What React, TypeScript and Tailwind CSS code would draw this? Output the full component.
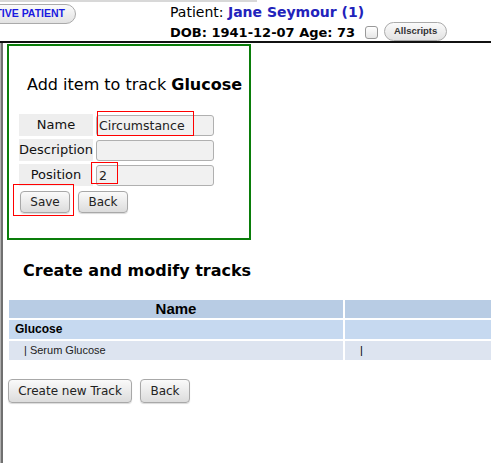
import React from "react";

const btn =
  "rounded-[4px] border border-[#a8a8a8] bg-gradient-to-b from-[#fafafa] to-[#dcdcdc] text-[#222] shadow-[0_1px_1px_rgba(0,0,0,0.15)]";

export default function App() {
  return (
    <div className="relative w-[491px] h-[465px] overflow-hidden bg-white text-black font-['DejaVu_Sans',sans-serif]">
      {/* header */}
      <div className="relative h-[43px] border-b-2 border-[#111]">
        <div className="absolute left-0 top-0 w-[257px] h-[2px] bg-[#d8d8d8]" />
        <div className="absolute left-[-46px] top-[4px] w-[122px] h-[20px] rounded-full border border-[#aaa] bg-gradient-to-b from-[#fbfbfb] to-[#e2e2e2] flex items-center justify-end pr-[10px] text-[10.5px] font-bold text-[#1a1ae0] font-['Liberation_Sans',sans-serif] whitespace-nowrap">
          ACTIVE PATIENT
        </div>
        <div className="absolute left-[170px] top-[3px] text-[14px] leading-[18px] whitespace-nowrap">
          Patient: <span className="font-bold text-[#2222bb]">Jane Seymour (1)</span>
        </div>
        <div className="absolute left-[170px] top-[22px] flex items-center whitespace-nowrap">
          <span className="text-[13px] font-bold leading-[18px] mt-[2px]">DOB: 1941-12-07 Age: 73</span>
          <span className="ml-[10px] w-[13px] h-[13px] rounded-[3px] border border-[#999] bg-gradient-to-b from-[#fff] to-[#e6e6e6]" />
          <span className="ml-[6px] h-[19px] w-[63px] rounded-full border border-[#aaa] bg-gradient-to-b from-[#fbfbfb] to-[#e2e2e2] flex items-center justify-center text-[9.5px] font-bold text-[#333] font-['Liberation_Sans',sans-serif] -mt-[2px]">
            Allscripts
          </span>
        </div>
      </div>

      {/* body */}
      <div className="flex h-[420px]">
        <div className="w-[1px] shrink-0 bg-[#b0b0b0]" />
        <div className="w-[2px] shrink-0 bg-[#707070]" />
        <div className="flex-1 min-w-0 pl-[4px]">
          {/* green box */}
          <div className="w-[244px] h-[196px] border-2 border-[#0a7d0a] mt-[1px] pl-[10px] pt-[28px] relative">
            <div className="pl-[8px] text-[16px] leading-[22px] whitespace-nowrap">
              Add item to track <span className="font-bold">Glucose</span>
            </div>
            <div className="mt-[18px] flex flex-col gap-[3px]">
              {[
                ["Name", "Circumstance"],
                ["Description", ""],
                ["Position", "2"],
              ].map(([label, val]) => (
                <div key={label} className="flex items-center h-[22px]">
                  <div className="w-[74px] h-[22px] bg-[#eeeeee] text-[13px] leading-[22px] text-center text-[#111] whitespace-nowrap">
                    {label}
                  </div>
                  <div className="ml-[3px] w-[118px] h-[21px] rounded-[3px] border border-[#b0b0b0] bg-[#f1f1f1] text-[12.5px] leading-[19px] pl-[2px] text-[#222]">
                    {val}
                  </div>
                </div>
              ))}
            </div>
            <div className="mt-[5px] flex gap-[8px] pl-[1px]">
              <div className={btn + " w-[50px] h-[22px] text-[12px] leading-[20px] text-center"}>Save</div>
              <div className={btn + " w-[50px] h-[22px] text-[12px] leading-[20px] text-center"}>Back</div>
            </div>
            {/* red annotation boxes */}
            <div className="absolute left-[88px] top-[65px] w-[97px] h-[25px] border border-[#ff0000]" />
            <div className="absolute left-[82px] top-[116px] w-[27px] h-[22px] border border-[#ff0000]" />
            <div className="absolute left-[4px] top-[138px] w-[61px] h-[32px] border border-[#ff0000]" />
          </div>

          <div className="mt-[20px] ml-[16px] text-[16px] font-bold leading-[22px] whitespace-nowrap">
            Create and modify tracks
          </div>

          <div className="mt-[18px] ml-[2px] w-[490px] font-['Liberation_Sans',sans-serif]">
            <div className="flex gap-[2px] h-[18px]">
              <div className="w-[334px] bg-[#b8cce4] text-[15px] font-bold text-center leading-[18px]">Name</div>
              <div className="flex-1 bg-[#b8cce4]" />
            </div>
            <div className="flex gap-[2px] h-[19px] mt-[2px]">
              <div className="w-[334px] bg-[#c6d9f0] text-[12px] font-bold leading-[19px] pl-[6px]">Glucose</div>
              <div className="flex-1 bg-[#c6d9f0]" />
            </div>
            <div className="flex gap-[2px] h-[19px] mt-[2px]">
              <div className="w-[334px] bg-[#dde4f0] text-[11px] leading-[19px] pl-[15px] text-[#222]">| Serum Glucose</div>
              <div className="flex-1 bg-[#dde4f0] text-[11px] leading-[19px] pl-[15px]">|</div>
            </div>
          </div>

          <div className="mt-[19px] ml-[1px] flex gap-[8px]">
            <div className={btn + " w-[124px] h-[24px] text-[12px] leading-[22px] text-center"}>Create new Track</div>
            <div className={btn + " w-[50px] h-[24px] text-[12px] leading-[22px] text-center"}>Back</div>
          </div>
        </div>
      </div>
    </div>
  );
}
